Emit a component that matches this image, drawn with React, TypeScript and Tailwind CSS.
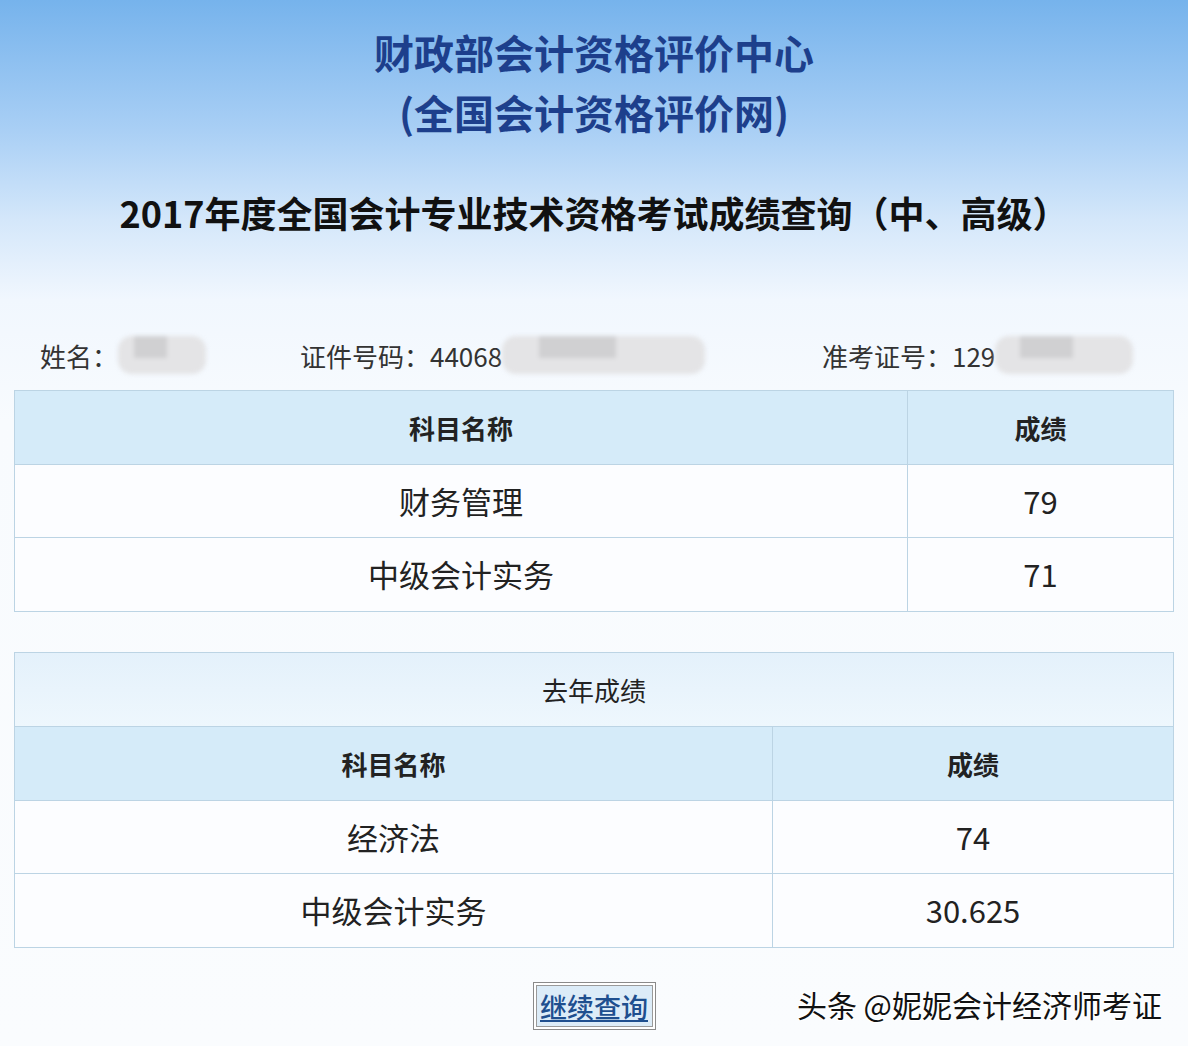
import React from "react";

const font = { fontFamily: '"Noto Sans CJK SC", "Noto Sans", sans-serif' };

const currentScores = [
  { name: "财务管理", score: "79" },
  { name: "中级会计实务", score: "71" },
];

const lastYearScores = [
  { name: "经济法", score: "74" },
  { name: "中级会计实务", score: "30.625" },
];

function Blur({ width }: { width: string }) {
  return (
    <div className={`relative h-[38px] ${width} rounded-[14px] bg-[#e4e4e6] blur-[2px]`}>
      <div className="absolute left-[18%] top-0 h-[22px] w-[38%] bg-[#d0d0d2]" />
    </div>
  );
}

function ScoreTable({
  caption,
  splitWidth,
  rows,
}: {
  caption?: string;
  splitWidth: string;
  rows: { name: string; score: string }[];
}) {
  return (
    <div className="mx-[14px] border border-[#bcd4e4] bg-white">
      {caption && (
        <div className="flex h-[74px] items-center justify-center border-b border-[#bcd4e4] bg-[linear-gradient(to_bottom,#e4f1fb,#eef7fd)] text-[26px] text-[#222]">
          {caption}
        </div>
      )}
      <div className="flex h-[74px] border-b border-[#bcd4e4] bg-[#d5ebf9] text-[26px] font-bold text-[#222]">
        <div className={`flex ${splitWidth} items-center justify-center border-r border-[#bcd4e4]`}>
          科目名称
        </div>
        <div className="flex flex-1 items-center justify-center">成绩</div>
      </div>
      {rows.map((row, i) => (
        <div
          key={row.name}
          className={`flex h-[73px] bg-[#fcfdff] text-[31px] text-[#222] ${
            i < rows.length - 1 ? "border-b border-[#bcd4e4]" : ""
          }`}
        >
          <div className={`flex ${splitWidth} items-center justify-center border-r border-[#bcd4e4]`}>
            {row.name}
          </div>
          <div className="flex flex-1 items-center justify-center">{row.score}</div>
        </div>
      ))}
    </div>
  );
}

export default function App() {
  return (
    <div
      style={font}
      className="relative h-[1046px] w-[1188px] overflow-hidden bg-[linear-gradient(to_bottom,#76b3ec_0px,#a9cff5_130px,#d4e7fa_220px,#f1f7fe_300px,#f8fbfe_420px,#fafcfe_1046px)]"
    >
      <div className="pt-[22px] text-center">
        <h1 className="text-[40px] font-bold leading-[60px] text-[#1d3f8c]">财政部会计资格评价中心</h1>
        <h1 className="text-[40px] font-bold leading-[60px] text-[#1d3f8c]">(全国会计资格评价网)</h1>
        <h2 className="mt-[40px] text-[36px] font-bold leading-[60px] text-[#111]">
          2017年度全国会计专业技术资格考试成绩查询（中、高级）
        </h2>
      </div>

      {/* Candidate info row */}
      <div className="mt-[93px] flex h-[40px] items-center text-[26px] text-[#333]">
        <div className="flex w-[300px] items-center pl-[40px]">
          <span>姓名：</span>
          <Blur width="w-[88px]" />
        </div>
        <div className="flex w-[522px] items-center">
          <span>证件号码：44068</span>
          <Blur width="w-[203px]" />
        </div>
        <div className="flex items-center">
          <span>准考证号：129</span>
          <Blur width="w-[138px]" />
        </div>
      </div>

      <div className="mt-[15px]">
        <ScoreTable splitWidth="w-[893px]" rows={currentScores} />
      </div>

      <div className="mt-[40px]">
        <ScoreTable caption="去年成绩" splitWidth="w-[758px]" rows={lastYearScores} />
      </div>

      <div className="mt-[34px] flex justify-center">
        <button className="h-[48px] w-[123px] border border-[#8a8a8a] bg-white p-[2px]">
          <span className="flex h-full w-full items-center justify-center border border-[#9a9a9a] bg-[#dcecf8] text-[27px] font-medium leading-none text-[#1e4f8f] underline underline-offset-2">
            继续查询
          </span>
        </button>
      </div>

      {/* Watermark overlay */}
      <div className="absolute bottom-[22px] right-[26px] text-[30px] leading-[40px] text-[#111] [text-shadow:1px_1px_0_#fff,-1px_-1px_0_#fff,1px_-1px_0_#fff,-1px_1px_0_#fff]">
        头条 @妮妮会计经济师考证
      </div>
    </div>
  );
}
